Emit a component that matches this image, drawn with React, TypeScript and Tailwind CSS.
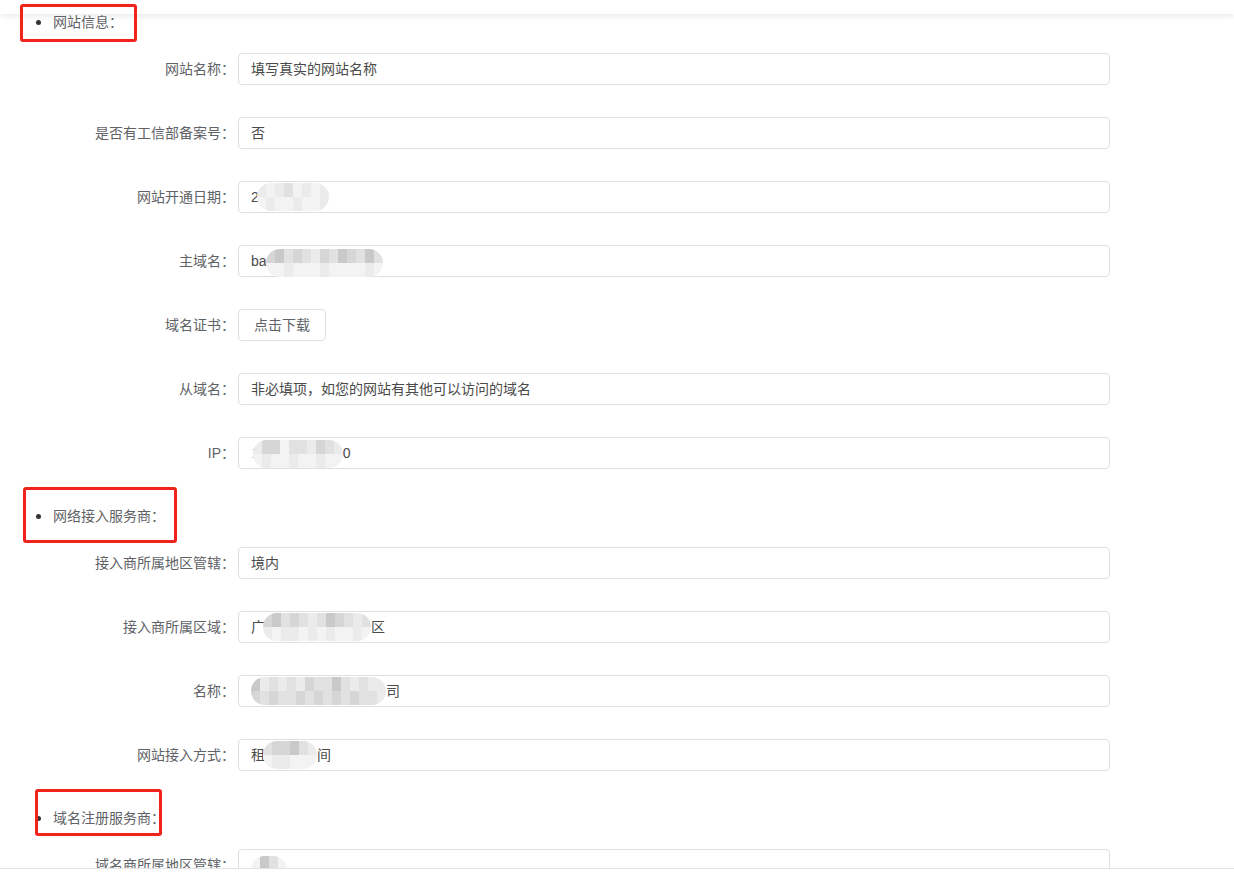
import React from "react";

const A = "bg-[#c9c9c9]";
const B = "bg-[#d6d6d6]";
const C = "bg-[#e1e1e1]";
const D = "bg-[#ebebeb]";
const E = "bg-[#f3f3f3]";
const F = "bg-[#bdbdbd]";

type MosaicProps = { top: string[]; bottom: string[]; className?: string };

const Mosaic: React.FC<MosaicProps> = ({ top, bottom, className = "" }) => (
  <span
    className={`inline-flex flex-col rounded-[14px] overflow-hidden blur-[0.4px] ${className}`}
  >
    <span className="flex">
      {top.map((c, i) => (
        <span key={i} className={`w-[9px] h-[14px] ${c}`} />
      ))}
    </span>
    <span className="flex">
      {bottom.map((c, i) => (
        <span key={i} className={`w-[9px] h-[14px] ${c}`} />
      ))}
    </span>
  </span>
);

const Field: React.FC<{ label: string; children?: React.ReactNode; last?: boolean }> = ({
  label,
  children,
  last,
}) => (
  <div className={`flex items-center h-[32px] ${last ? "" : "mb-[32px]"}`}>
    <div className="w-[238px] shrink-0 pr-[3px] text-right text-[14px] text-[#606266] whitespace-nowrap">
      {label}
    </div>
    {children}
  </div>
);

const Input: React.FC<{ children?: React.ReactNode }> = ({ children }) => (
  <div className="w-[872px] h-[32px] flex items-center border border-[#dcdfe6] rounded-[4px] px-[12px] text-[14px] text-[#4a4a4a] whitespace-nowrap">
    {children}
  </div>
);

const Heading: React.FC<{ title: string; box: string }> = ({ title, box }) => (
  <div className="relative flex items-center h-[20px] mb-[21px] pl-[36px]">
    <span className="w-[5px] h-[5px] rounded-full bg-[#333]" />
    <span className="ml-[12px] text-[14px] text-[#606266]">{title}</span>
    <span className={`absolute border-[3px] border-[#f2221c] rounded-[3px] ${box}`} />
  </div>
);

export default function App() {
  return (
    <div
      className="relative w-full h-[873px] overflow-hidden bg-white"
      style={{ fontFamily: '"Liberation Sans", "Noto Sans CJK SC", sans-serif' }}
    >
      {/* header bar shadow behind the content */}
      <div className="absolute top-0 inset-x-0 h-[14px] bg-white shadow-[0_2px_6px_rgba(0,0,0,0.09)]" />

      <div className="relative z-10 pt-[12px]">
        <Heading title="网站信息：" box="left-[20px] top-[-8px] w-[117px] h-[38px]" />
        <Field label="网站名称：">
          <Input>填写真实的网站名称</Input>
        </Field>
        <Field label="是否有工信部备案号：">
          <Input>否</Input>
        </Field>
        <Field label="网站开通日期：">
          <Input>
            <span>2</span>
            <Mosaic
              className="-ml-[2px]"
              top={[D, E, D, C, E, D, E, D]}
              bottom={[E, D, E, E, D, E, E, D]}
            />
          </Input>
        </Field>
        <Field label="主域名：">
          <Input>
            <span>ba</span>
            <Mosaic
              className="-ml-[1px] mt-[4px]"
              top={[B, A, C, B, C, D, B, C, A, B, C, A, C]}
              bottom={[E, E, D, E, E, E, D, E, E, E, E, D, E]}
            />
          </Input>
        </Field>
        <Field label="域名证书：">
          <button className="h-[32px] w-[88px] border border-[#dcdfe6] rounded-[4px] text-[14px] text-[#606266] bg-white">
            点击下载
          </button>
        </Field>
        <Field label="从域名：">
          <Input>非必填项，如您的网站有其他可以访问的域名</Input>
        </Field>
        <Field label="IP：" last>
          <Input>
            <span className="text-[#c8c8c8]">1</span>
            <Mosaic
              className="-ml-[6px] mt-[2px]"
              top={[D, B, B, E, C, C, D, B, C, D]}
              bottom={[E, D, E, E, D, E, E, D, E, E]}
            />
            <span>0</span>
          </Input>
        </Field>

        <div className="h-[37px]" />
        <Heading title="网络接入服务商：" box="left-[23px] top-[-19px] w-[154px] h-[56px]" />
        <Field label="接入商所属地区管辖：">
          <Input>境内</Input>
        </Field>
        <Field label="接入商所属区域：">
          <Input>
            <span>广</span>
            <Mosaic
              className="-ml-[2px]"
              top={[B, A, C, B, C, D, C, A, B, C, D, C]}
              bottom={[D, E, D, D, E, D, E, D, E, E, D, E]}
            />
            <span>区</span>
          </Input>
        </Field>
        <Field label="名称：">
          <Input>
            <Mosaic
              top={[A, D, C, D, C, D, B, C, C, A, C, D, C, D, D]}
              bottom={[B, C, B, C, C, B, C, B, C, B, C, B, C, C, D]}
            />
            <span>司</span>
          </Input>
        </Field>
        <Field label="网站接入方式：" last>
          <Input>
            <span>租</span>
            <Mosaic
              className="-ml-[2px]"
              top={[C, B, B, A, C, D]}
              bottom={[E, D, D, E, E, E]}
            />
            <span>间</span>
          </Input>
        </Field>

        <div className="h-[37px]" />
        <Heading title="域名注册服务商：" box="left-[35px] top-[-19px] w-[127px] h-[47px]" />
        <Field label="域名商所属地区管辖：">
          <Input>
            <Mosaic className="mt-[10px]" top={[E, A, C, E]} bottom={[E, D, E, E]} />
          </Input>
        </Field>
      </div>

      {/* footer bar */}
      <div className="absolute bottom-0 inset-x-0 h-[5px] z-20 bg-white border-t border-[#e4e4e4]" />
    </div>
  );
}
